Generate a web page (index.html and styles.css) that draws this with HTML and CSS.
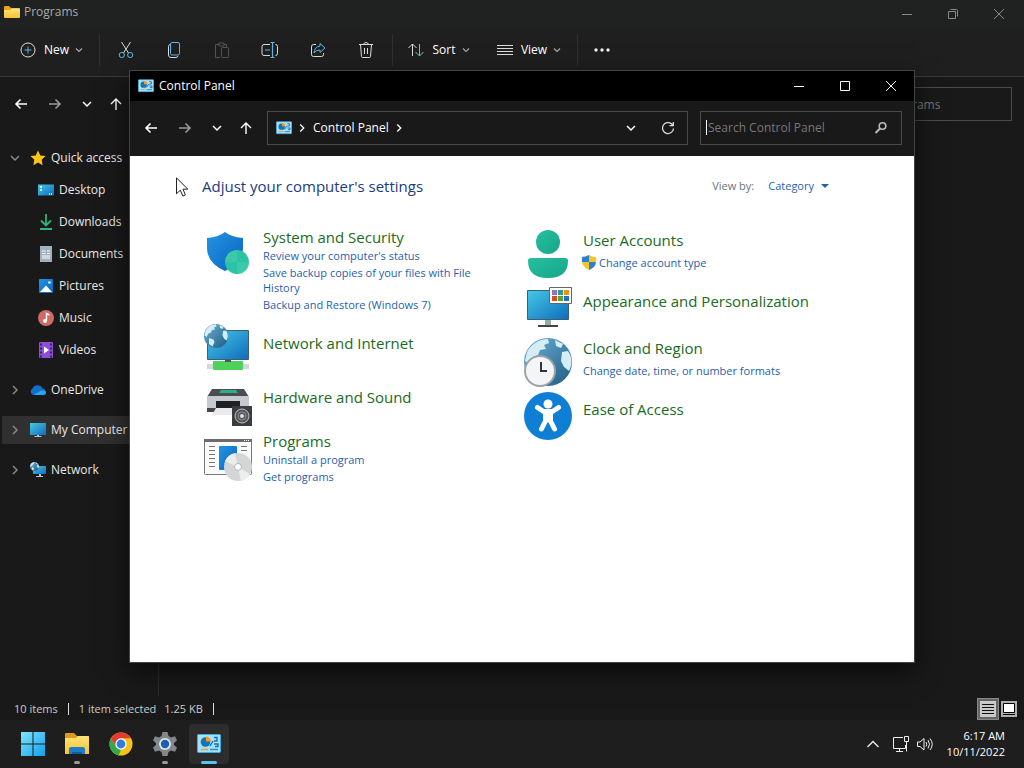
FILE: index.html
```
<!DOCTYPE html>
<html lang="en">
<head>
<meta charset="UTF-8">
<meta name="viewport" content="width=device-width, initial-scale=1.0">
<title>Control Panel</title>
<link rel="stylesheet" href="styles.css">
</head>
<body>

<!-- shared icons -->
<svg class="defs" aria-hidden="true">
  <defs>
    <linearGradient id="g-blue" x1="0" y1="0" x2="1" y2="1"><stop offset="0" stop-color="#2393e2"/><stop offset="1" stop-color="#0a66be"/></linearGradient>
    <linearGradient id="g-screen" x1="0" y1="0" x2="1" y2="1"><stop offset="0" stop-color="#45c8e6"/><stop offset="1" stop-color="#0f6cbd"/></linearGradient>
    <linearGradient id="g-green" x1="0" y1="0" x2="1" y2="1"><stop offset="0" stop-color="#26bfa0"/><stop offset="1" stop-color="#17a588"/></linearGradient>
    <linearGradient id="g-globe" x1="0" y1="0" x2="1" y2="1"><stop offset="0" stop-color="#6fb4d6"/><stop offset="1" stop-color="#1d5a83"/></linearGradient>
    <linearGradient id="g-folder" x1="0" y1="0" x2="0" y2="1"><stop offset="0" stop-color="#ffe27a"/><stop offset="1" stop-color="#f7c331"/></linearGradient>
    <linearGradient id="g-win" x1="0" y1="0" x2="1" y2="1"><stop offset="0" stop-color="#7fe3ff"/><stop offset="1" stop-color="#12a0ec"/></linearGradient>
  </defs>
  <symbol id="i-back" viewBox="0 0 16 16"><path d="M14 8H3M7.500 3.500 3 8l4.500 4.500" fill="none" stroke="currentColor" stroke-width="1.600"/></symbol>
  <symbol id="i-forward" viewBox="0 0 16 16"><path d="M2 8h11M8.500 3.500 13 8l-4.500 4.500" fill="none" stroke="currentColor" stroke-width="1.600"/></symbol>
  <symbol id="i-up" viewBox="0 0 16 16"><path d="M8 14V3M3 8l5-5 5 5" fill="none" stroke="currentColor" stroke-width="1.400"/></symbol>
  <symbol id="i-down" viewBox="0 0 16 16"><path d="m4 6 4 4 4-4" fill="none" stroke="currentColor" stroke-width="1.500"/></symbol>
  <symbol id="i-right" viewBox="0 0 16 16"><path d="m6 4 4 4-4 4" fill="none" stroke="currentColor" stroke-width="1.500"/></symbol>
  <symbol id="i-min" viewBox="0 0 12 12"><path d="M1 6.500h10" stroke="currentColor"/></symbol>
  <symbol id="i-max" viewBox="0 0 12 12"><path d="M1.500 1.500h9v9h-9z" fill="none" stroke="currentColor"/></symbol>
  <symbol id="i-restore" viewBox="0 0 12 12"><path d="M1.500 3.500h7v7h-7zM3.500 1.500h6q1 0 1 1v6" fill="none" stroke="currentColor"/></symbol>
  <symbol id="i-close" viewBox="0 0 12 12"><path d="m1 1 10 10M11 1 1 11" stroke="currentColor"/></symbol>
  <symbol id="i-panel" viewBox="0 0 24 20">
    <rect x=".5" y=".5" width="23" height="18" rx="1" fill="#a5e2fa" stroke="#3aaee0"/>
    <circle cx="8.500" cy="8" r="4.800" fill="#1673b8"/><path d="M9 7.500V2.500a5 5 0 0 1 5 5z" fill="#f39a2b"/>
    <path d="m13 12 3-5M17 3.500h3v3.500h-3M17 10h4v2.500h-3" fill="none" stroke="#1b6fae" stroke-width="1.400"/>
    <path d="M4 15.500h7" stroke="#f39a2b" stroke-width="1.500"/><path d="M13 15.500h8" stroke="#2f8fd0" stroke-width="1.500"/>
  </symbol>
  <symbol id="i-globe" viewBox="0 0 48 48">
    <circle cx="24" cy="24" r="24" fill="url(#g-globe)"/>
    <path d="M3 14C8 5 16 1 24 1l1 4-5 2 2 4-6 1-2 5-5 2-4 7-4-3zM31 2l8 4-2 4-5-2zM38 14l6-1c5 7 4 15 1 20l-5-4-3-6zM10 28l9 3 2 5-4 9-7-5z" fill="#d5edf7"/>
  </symbol>
  <symbol id="i-monitor" viewBox="0 0 16 16"><path d="M0 1h16v12H0z" fill="url(#g-screen)"/><path d="M7 13h2v1H7zM4.500 14h7v1h-7z" fill="#b9c3cb"/></symbol>
  <symbol id="i-folder" viewBox="0 0 16 16"><path d="M0 3q0-1 1-1h4l2 2h8q1 0 1 1v3H0z" fill="#e9a321"/><path d="M0 6h6l2-1.500h7q1 0 1 1V13q0 1-1 1H1q-1 0-1-1z" fill="url(#g-folder)"/></symbol>
</svg>

<div class="desktop">

  <section class="explorer" aria-label="Programs">
    <header class="explorer-title">
      <div class="explorer-name"><svg class="ico"><use href="#i-folder"/></svg><span>Programs</span></div>
      <div class="win-buttons">
        <button aria-label="Minimize"><svg><use href="#i-min"/></svg></button>
        <button aria-label="Restore"><svg><use href="#i-restore"/></svg></button>
        <button aria-label="Close"><svg><use href="#i-close"/></svg></button>
      </div>
    </header>

    <div class="toolbar">
      <button class="tool tool-new">
        <svg class="ico" viewBox="0 0 16 16" fill="none"><circle cx="8" cy="8" r="7" stroke="#ddd"/><path d="M8 4.500v7M4.500 8h7" stroke="#5cb8e6"/></svg>
        <span>New</span><svg class="caret"><use href="#i-down"/></svg>
      </button>
      <span class="rule"></span>
      <div class="tool-icons">
        <button aria-label="Cut"><svg class="ico" viewBox="0 0 16 16" fill="none"><path d="M3.500 0 10.500 11M12.500 0l-7 11" stroke="#ddd"/><circle cx="3.800" cy="13" r="2.600" stroke="#5cb8e6"/><circle cx="12.200" cy="13" r="2.600" stroke="#5cb8e6"/></svg></button>
        <button aria-label="Copy"><svg class="ico" viewBox="0 0 16 16" fill="none"><rect x="4.500" y=".5" width="9" height="12.500" rx="1.500" stroke="#5cb8e6"/><path d="M4 2.500Q2.500 3 2.500 4.500V13q0 2.500 2.500 2.500h5q1.500 0 2-1.500" stroke="#ddd"/></svg></button>
        <button aria-label="Paste" disabled><svg class="ico" viewBox="0 0 16 16" fill="none" stroke="#555"><path d="M5 2.500H1.500v13H6M10 2.500h2.500V5M5 1h5v3H5z"/><rect x="7.500" y="5.500" width="7" height="10" rx="1"/></svg></button>
        <button aria-label="Rename"><svg class="ico ico-wide" viewBox="0 0 18 16" fill="none"><path d="M9 2.500H3Q1 2.500 1 4.500v7q0 2 2 2h6M14.500 2.500q2 0 2 2v7q0 2-2 2" stroke="#ddd"/><path d="M9.500.5h4M11.500.5v15M9.500 15.500h4M4 8h5" stroke="#5cb8e6" stroke-width="1.200"/></svg></button>
        <button aria-label="Share"><svg class="ico" viewBox="0 0 16 16" fill="none"><path d="M6 2.500H3.500q-2 0-2 2v8q0 2 2 2h8q2 0 2-2V11" stroke="#ddd"/><path d="M10 1.500 15 6l-5 4.500V8q-4 0-6 3 .5-6 6-7z" stroke="#5cb8e6"/></svg></button>
        <button aria-label="Delete"><svg class="ico" viewBox="0 0 16 16" fill="none" stroke="#ddd"><path d="M1 2.500h14M5.500 2.500Q6 .5 8 .5t2.500 2M2.500 2.500l1 12q0 1 1 1h7q1 0 1-1l1-12M6.500 6v6M9.500 6v6"/></svg></button>
      </div>
      <span class="rule"></span>
      <button class="tool tool-sort">
        <svg class="ico ico-wide" viewBox="0 0 18 16" fill="none"><path d="M5.500 14V2M1.500 6l4-4 4 4" stroke="#ddd"/><path d="M12.500 2v12M8.500 10l4 4 4-4" stroke="#6cc5d0"/></svg>
        <span>Sort</span><svg class="caret"><use href="#i-down"/></svg>
      </button>
      <button class="tool tool-view">
        <svg class="ico" viewBox="0 0 16 16" stroke="#ddd"><path d="M0 3.500h16M0 6.500h16M0 9.500h16M0 12.500h16"/></svg>
        <span>View</span><svg class="caret"><use href="#i-down"/></svg>
      </button>
      <span class="rule"></span>
      <button class="tool-more" aria-label="See more"><svg class="ico ico-wide" viewBox="0 0 18 16" fill="#eee"><circle cx="3" cy="8" r="1.700"/><circle cx="9" cy="8" r="1.700"/><circle cx="15" cy="8" r="1.700"/></svg></button>
    </div>

    <div class="nav-row">
      <div class="nav-buttons">
        <button aria-label="Back"><svg class="ico"><use href="#i-back"/></svg></button>
        <button aria-label="Forward" class="dim"><svg class="ico"><use href="#i-forward"/></svg></button>
        <button aria-label="Recent locations" class="slim"><svg class="ico"><use href="#i-down"/></svg></button>
        <button aria-label="Up" class="slim"><svg class="ico"><use href="#i-up"/></svg></button>
      </div>
      <div class="address"></div>
      <input class="explorer-search" type="text" placeholder="Search Programs" aria-label="Search Programs">
    </div>

    <div class="explorer-body">
      <nav class="sidebar">
        <ul class="group">
          <li><a class="row" href="#"><svg class="chev"><use href="#i-down"/></svg><svg class="ico" viewBox="0 0 16 16"><path d="m8 .5 2.300 4.900 5.200.7-3.800 3.700.9 5.400L8 12.600l-4.600 2.600.9-5.400L.5 6.100l5.200-.7z" fill="#fcc419"/></svg><span>Quick access</span></a></li>
          <li><a class="row sub" href="#"><svg class="ico" viewBox="0 0 16 16"><path d="M0 2.500h16v11H0z" fill="url(#g-screen)"/><path d="M2 5h2M2 8h2M11 12h1M13 12h1" stroke="#fff" stroke-width="1.500"/></svg><span>Desktop</span></a></li>
          <li><a class="row sub" href="#"><svg class="ico" viewBox="0 0 16 16" fill="none" stroke="#2fb380" stroke-width="1.800"><path d="M8 0v11M3 6.500l5 5 5-5M2 15h12"/></svg><span>Downloads</span></a></li>
          <li><a class="row sub" href="#"><svg class="ico" viewBox="0 0 16 16"><path d="M2 0h12v16H2z" fill="#9fb0bf"/><path d="M4 5h3.500M4 7.500h3.500M9 5h3M9 7.500h3M4 10h8M4 12h8" stroke="#fff"/></svg><span>Documents</span></a></li>
          <li><a class="row sub" href="#"><svg class="ico" viewBox="0 0 16 16"><rect x="1" y="1" width="14" height="14" rx="1" fill="url(#g-blue)"/><path d="m2 14 6-6.500 6 6.500z" fill="#fff"/><circle cx="11.500" cy="4.500" r="1.300" fill="#fff"/></svg><span>Pictures</span></a></li>
          <li><a class="row sub" href="#"><svg class="ico" viewBox="0 0 16 16"><circle cx="8" cy="8" r="8" fill="#cf6a66"/><path d="M8.500 10.500v-7l3 1.500" fill="none" stroke="#fff" stroke-width="1.400"/><circle cx="7" cy="11" r="2" fill="#fff"/></svg><span>Music</span></a></li>
          <li><a class="row sub" href="#"><svg class="ico" viewBox="0 0 16 16"><rect x="1" width="14" height="16" rx="1" fill="#8d4fd6"/><path d="M3 1.500v14M13 1.500v14" stroke="#3b1a73" stroke-width="2" stroke-dasharray="2 2"/><path d="m6 4.500 5 3.500-5 3.500z" fill="#fff"/></svg><span>Videos</span></a></li>
        </ul>
        <ul class="group">
          <li><a class="row" href="#"><svg class="chev"><use href="#i-right"/></svg><svg class="ico" viewBox="0 0 16 16"><path d="M3.500 13A3.500 3.500 0 0 1 2.500 6.500 5.500 5.500 0 0 1 12.500 6.500 3.300 3.300 0 0 1 13 13z" fill="#0f6fc9"/><path d="M3.500 13 11 8.500q5-.5 5 2 0 2.500-3 2.500z" fill="#2ba4ee"/></svg><span>OneDrive</span></a></li>
        </ul>
        <ul class="group">
          <li><a class="row selected" href="#"><svg class="chev"><use href="#i-right"/></svg><svg class="ico"><use href="#i-monitor"/></svg><span>My Computer</span></a></li>
        </ul>
        <ul class="group">
          <li><a class="row" href="#"><svg class="chev"><use href="#i-right"/></svg><svg class="ico" viewBox="0 0 16 16"><path d="M3 4h13v8H3z" fill="url(#g-screen)"/><path d="M9 12h2v2H9zM6 14h7v1H6z" fill="#b9c3cb"/><use href="#i-globe" width="9" height="9"/></svg><span>Network</span></a></li>
        </ul>
      </nav>
      <div class="files"></div>
    </div>

    <footer class="status">
      <span>10 items</span><i></i><span>1 item selected</span><span class="size">1.25 KB</span><i></i>
      <div class="status-views">
        <button class="on" aria-label="Details view"><svg viewBox="0 0 16 16"><path d="M0 0h16v16H0z" fill="#c9c9c9"/><path d="M2 3.500h12M2 6.500h12M2 9.500h12M2 12.500h12" stroke="#111"/></svg></button>
        <button aria-label="Large icons"><svg viewBox="0 0 16 16"><path d="M0 0h16v16H0z" fill="#b0b0b0"/><path d="M2.500 2.500h11v9h-11z" fill="#fff" stroke="#000"/><path d="M2 13.500h12" stroke="#000"/></svg></button>
      </div>
    </footer>
  </section>

  <section class="panel" aria-label="Control Panel">
    <header class="panel-title">
      <svg class="ico"><use href="#i-panel"/></svg><span>Control Panel</span>
      <div class="win-buttons">
        <button aria-label="Minimize"><svg><use href="#i-min"/></svg></button>
        <button aria-label="Maximize"><svg><use href="#i-max"/></svg></button>
        <button aria-label="Close"><svg><use href="#i-close"/></svg></button>
      </div>
    </header>

    <div class="panel-nav">
      <div class="nav-buttons">
        <button aria-label="Back"><svg class="ico"><use href="#i-back"/></svg></button>
        <button aria-label="Forward" class="dim"><svg class="ico"><use href="#i-forward"/></svg></button>
        <button aria-label="Recent locations" class="slim"><svg class="ico"><use href="#i-down"/></svg></button>
        <button aria-label="Up" class="slim"><svg class="ico"><use href="#i-up"/></svg></button>
      </div>
      <div class="address">
        <svg class="ico"><use href="#i-panel"/></svg>
        <svg class="crumb"><use href="#i-right"/></svg>
        <a href="#">Control Panel</a>
        <svg class="crumb"><use href="#i-right"/></svg>
        <button class="history" aria-label="Previous locations"><svg class="ico"><use href="#i-down"/></svg></button>
        <button aria-label="Refresh"><svg class="ico" viewBox="0 0 16 16" fill="none" stroke="#ddd" stroke-width="1.300"><path d="M13.500 8.500a5.500 5.500 0 1 1-2-4.700L13 5.500M13.300 2v3.700H9.500"/></svg></button>
      </div>
      <div class="search">
        <span class="text-caret"></span>
        <input type="text" placeholder="Search Control Panel" aria-label="Search Control Panel">
        <svg class="ico" viewBox="0 0 16 16" fill="none" stroke="#bbb"><circle cx="9.500" cy="6" r="3.300" stroke-width="1.600"/><path d="M7 8.500 2.500 13" stroke-width="2"/></svg>
      </div>
    </div>

    <main class="content">
      <div class="content-head">
        <h1>Adjust your computer's settings</h1>
        <div class="view-by"><span>View by:</span><button>Category<svg viewBox="0 0 8 4"><path d="M0 0h8L4 4z" fill="#1d63a5"/></svg></button></div>
      </div>

      <div class="categories">
        <div class="column">
          <article class="tile tile-list">
            <svg class="tile-icon" viewBox="0 0 48 52"><path d="M21 5q6 5 18 6v10q0 15-18 23Q3 36 3 21V11q12-1 18-6z" fill="url(#g-blue)"/><circle cx="33" cy="35" r="12" fill="#2cc3a4"/><path d="M33 35V23a12 12 0 0 0-12 12zM33 35h12a12 12 0 0 1-12 12z" fill="#4fd3b4" opacity=".4"/></svg>
            <div class="tile-text">
              <h2><a href="#">System and Security</a></h2>
              <ul>
                <li><a href="#">Review your computer's status</a></li>
                <li><a href="#">Save backup copies of your files with File History</a></li>
                <li><a href="#">Backup and Restore (Windows 7)</a></li>
              </ul>
            </div>
          </article>
          <article class="tile tile-bare">
            <svg class="tile-icon" viewBox="0 0 48 52"><path d="M3.500 7.500h41v29h-41z" fill="url(#g-screen)" stroke="#3f5f70"/><path d="M3 41h6v5H3zM39 41h6v5h-6z" fill="#d5d9d5"/><rect x="9" y="38" width="30" height="9" rx="1" fill="#4ed15b"/><path d="M21 37h6v2h-6z" fill="#555"/><use href="#i-globe" y="1" width="24" height="24"/></svg>
            <div class="tile-text"><h2><a href="#">Network and Internet</a></h2></div>
          </article>
          <article class="tile tile-bare">
            <svg class="tile-icon" viewBox="0 0 48 52"><path d="M8 12h32l5 8H3z" fill="#4a4d51"/><path d="M17 13h15l2 3H15z" fill="#2fae8a"/><path d="M3 19h42v13H3z" fill="#c6c9cd"/><path d="M3 31h42v4H3z" fill="#44474b"/><path d="M12 24h24v10H12z" fill="#1e2023"/><path d="M12 31h22l-3 7H8z" fill="#e8eaec"/><path d="M28 29h20v20H28z" fill="#3a3c3f"/><circle cx="38" cy="39" r="7" fill="#55585c" stroke="#c0c0c0"/><circle cx="38" cy="39" r="4" fill="none" stroke="#888"/><circle cx="38" cy="39" r="2" fill="#ddd"/></svg>
            <div class="tile-text"><h2><a href="#">Hardware and Sound</a></h2></div>
          </article>
          <article class="tile tile-list">
            <svg class="tile-icon" viewBox="0 0 48 52"><rect x=".5" y="8.500" width="47" height="35" rx="1" fill="#fafafa" stroke="#777"/><path d="M0 8h48v3H0z" fill="#6c6c6c"/><path d="M40 9.500h1m1 0h1m1 0h1" stroke="#fff"/><path d="M5 15.500h6M5 19.500h6M5 23.500h6M5 27.500h6M5 31.500h6M5 35.500h6M37 15.500h6M37 19.500h6" stroke="#777"/><rect x="15" y="15" width="18" height="24" rx="1" fill="url(#g-blue)"/><circle cx="34" cy="36" r="14" fill="#d3d5d6"/><path d="m34 36-13-6a14 14 0 0 1 10-8zM34 36l12 7a14 14 0 0 1-9 7z" fill="#eceeee"/><circle cx="34" cy="36" r="3.500" fill="#fff" stroke="#b5b5b5"/></svg>
            <div class="tile-text">
              <h2><a href="#">Programs</a></h2>
              <ul>
                <li><a href="#">Uninstall a program</a></li>
                <li><a href="#">Get programs</a></li>
              </ul>
            </div>
          </article>
        </div>

        <div class="column">
          <article class="tile tile-one">
            <svg class="tile-icon" viewBox="0 0 48 52"><circle cx="24" cy="15" r="12" fill="url(#g-green)"/><path d="M7 31h34q3 0 3 3 0 17-20 17T4 34q0-3 3-3z" fill="url(#g-green)"/></svg>
            <div class="tile-text">
              <h2><a href="#">User Accounts</a></h2>
              <ul>
                <li class="uac"><svg viewBox="0 0 14 15"><path d="M7 0q3 2 7 2v4Q14 12 7 15 0 12 0 6V2q4 0 7-2z" fill="#f6c52e"/><path d="M7 0v7H0V2q4 0 7-2zM7 7h6.900Q13.500 12.500 7 15z" fill="#2a7fd0"/></svg><a href="#">Change account type</a></li>
              </ul>
            </div>
          </article>
          <article class="tile tile-bare">
            <svg class="tile-icon" viewBox="0 0 48 52"><path d="M3.500 9.500h41v29h-41z" fill="url(#g-screen)" stroke="#3f5f70"/><path d="M21 39h6v5h-6z" fill="#9aa"/><path d="M14 44h20v2H14z" fill="#444"/><path d="M25.500 6.500h22v16h-22z" fill="#fff" stroke="#666"/><path d="M28 9h5v5h-5z" fill="#9a6fc0"/><path d="M34 9h5v5h-5z" fill="#2a9d8f"/><path d="M40 9h5v5h-5z" fill="#ee8f1c"/><path d="M28 15h5v5h-5z" fill="#d94a2b"/><path d="M34 15h5v5h-5z" fill="#55a630"/><path d="M40 15h5v5h-5z" fill="#1f6fc4"/></svg>
            <div class="tile-text"><h2><a href="#">Appearance and Personalization</a></h2></div>
          </article>
          <article class="tile tile-one">
            <svg class="tile-icon" viewBox="0 0 48 52"><use href="#i-globe" y="3" width="48" height="48"/><circle cx="16" cy="36" r="15" fill="#f4f5f6" stroke="#9da2a6" stroke-width="2"/><path d="M17 27v9h6" fill="none" stroke="#333" stroke-width="2"/></svg>
            <div class="tile-text">
              <h2><a href="#">Clock and Region</a></h2>
              <ul><li><a href="#">Change date, time, or number formats</a></li></ul>
            </div>
          </article>
          <article class="tile tile-bare">
            <svg class="tile-icon" viewBox="0 0 48 52"><circle cx="24" cy="27" r="24" fill="#0f7fd6"/><circle cx="24" cy="15" r="4.500" fill="#fff"/><path d="m13.500 18.500 6 4h9l6-4M24 23v8M21.500 25v7l-4 8M26.500 25v7l4 8" fill="none" stroke="#fff" stroke-width="5" stroke-linecap="round" stroke-linejoin="round"/></svg>
            <div class="tile-text"><h2><a href="#">Ease of Access</a></h2></div>
          </article>
        </div>
      </div>
    </main>
  </section>

  <footer class="taskbar">
    <div class="apps">
      <button aria-label="Start"><svg viewBox="0 0 24 24"><path d="M0 0h11.500v11.500H0zM12.500 0H24v11.500H12.500zM0 12.500h11.500V24H0zM12.500 12.500H24V24H12.500z" fill="url(#g-win)"/></svg></button>
      <button class="open" aria-label="File Explorer"><svg viewBox="0 0 24 24"><path d="M0 2q0-1 1-1h8l3 3h11q1 0 1 1v6H0z" fill="#dd9a1c"/><path d="M0 6h11l2-2h10q1 0 1 1v17H0z" fill="url(#g-folder)"/><path d="M4 22v-5q0-2 2-2h12q2 0 2 2v5z" fill="#1f7cc8"/><path d="M7 20h10v2H7z" fill="#125b9c"/></svg></button>
      <button aria-label="Chrome"><svg viewBox="0 0 24 24"><circle cx="12" cy="12" r="11.500" fill="#fbc116"/><path d="M2 6.250 7 15l5 2.700-2.300 5.600A11.500 11.500 0 0 1 2 6.250z" fill="#2da94f"/><path d="M2 6.250A11.500 11.500 0 0 1 22 6.250H12L7 15z" fill="#e33b2e"/><circle cx="12" cy="12" r="5.700" fill="#fff"/><circle cx="12" cy="12" r="4.400" fill="#2f7de1"/></svg></button>
      <button class="open" aria-label="Settings"><svg viewBox="0 0 24 24"><path d="M9.500 0h5l1 4 2.500 1.500 4-1.200 2 4.200-3 2.500v2l3 2.500-2 4.200-4-1.200-2.500 1.500-1 4h-5l-1-4L6 18.500l-4 1.200-2-4.200L3 13v-2L0 8.500l2-4.200 4 1.200L8.500 4z" fill="#848789"/><circle cx="12" cy="12" r="6" fill="#dfe5ea"/><circle cx="12" cy="12" r="4.200" fill="#1a5fae"/></svg></button>
      <button class="open active" aria-label="Control Panel"><svg viewBox="0 0 24 24"><use href="#i-panel" y="2" width="24" height="20"/></svg></button>
    </div>
    <div class="tray">
      <button aria-label="Show hidden icons"><svg viewBox="0 0 16 16" fill="none" stroke="#eee" stroke-width="1.300"><path d="m2.500 11 5.500-5.500 5.500 5.500"/></svg></button>
      <button aria-label="Network"><svg viewBox="0 0 16 16" fill="none" stroke="#eee"><path d="M10 1.500H.5v11h12V9M6.500 13v2.500M3 15.500h7M11.500.5h4v5h-4zM13.500 5.500v10"/></svg></button>
      <button aria-label="Volume"><svg viewBox="0 0 16 16" fill="none" stroke="#eee"><path d="M.5 6v4.500H3l4 3.500V2.500L3 6zM9 6q1.500 2.200 0 4.500M11 4q3 4.200 0 8.500M13 2.500q4.500 5.700 0 11.500"/></svg></button>
      <div class="clock"><time>6:17 AM</time><time>10/11/2022</time></div>
    </div>
  </footer>

  <svg class="cursor" viewBox="0 0 12 20"><path d="M.5.8v16l3.800-3.600 2.500 5.800 2.600-1.100L7 12.200h4.800z" fill="#fff" stroke="#222"/></svg>
</div>

</body>
</html>
```
FILE: styles.css
```
* {
  box-sizing: border-box;
  margin: 0;
  padding: 0;
}
body {
  font-family: "Open Sans", "Noto Sans", sans-serif;
  font-size: 12px;
  line-height: 16px;
  color: #e8e8e8;
  background: #191919;
}
button, input {
  font: inherit;
  color: inherit;
  background: none;
  border: 0;
  outline: 0;
}
button {
  display: flex;
  align-items: center;
  justify-content: center;
}
a {
  color: inherit;
  text-decoration: none;
}
ul {
  list-style: none;
}
svg {
  display: block;
  flex: none;
}
.defs {
  position: absolute;
  width: 0;
  height: 0;
}
.ico {
  width: 16px;
  height: 16px;
}
.ico-wide {
  width: 18px;
}
.desktop {
  position: relative;
  display: flex;
  flex-direction: column;
  height: 100vh;
  overflow: hidden;
}

/* explorer window */
.explorer {
  flex: 1;
  display: flex;
  flex-direction: column;
  min-height: 0;
}
.explorer-title {
  display: flex;
  justify-content: space-between;
  height: 28px;
  background: #202121;
  color: #aaa;
}
.explorer-name {
  display: flex;
  align-items: center;
  gap: 4px;
  height: 24px;
  padding-left: 4px;
}
.win-buttons {
  display: flex;
  margin-left: auto;
}
.win-buttons button {
  width: 46px;
}
.win-buttons svg {
  width: 12px;
  height: 12px;
}
.explorer .win-buttons {
  color: #888;
  margin-right: 2px;
}
.toolbar {
  display: flex;
  align-items: center;
  height: 49px;
  padding: 0 0 4px 21px;
  background: #1f1f1f;
  border-bottom: 1px solid #3a3a3a;
  color: #fff;
}
.tool {
  gap: 8px;
}
.caret {
  width: 12px;
  height: 12px;
  margin-left: -4px;
  color: #aaa;
}
.tool-new {
  width: 63px;
}
.rule {
  width: 1px;
  height: 32px;
  margin: 0 15px;
  background: #303030;
}
.tool-icons {
  display: flex;
  margin: 0 -13px;
}
.tool-icons button {
  width: 48px;
}
.tool-sort {
  width: 62px;
}
.tool-view {
  width: 64px;
  margin-left: 28px;
}

.nav-row {
  display: flex;
  align-items: center;
  height: 54px;
  padding-right: 12px;
}
.nav-buttons {
  display: flex;
  padding-left: 4px;
  margin-right: 8px;
  color: #fff;
}
.nav-buttons button {
  width: 34px;
  height: 32px;
}
.nav-buttons .slim {
  width: 29px;
}
.nav-buttons .dim {
  color: #999;
}
.address {
  flex: 1;
  display: flex;
  align-items: center;
  height: 34px;
  border: 1px solid #4a4a4a;
}
.explorer-search {
  width: 172px;
  height: 34px;
  margin-left: 6px;
  padding: 0 4px;
  border: 1px solid #4a4a4a;
}
input::placeholder {
  color: #777;
  opacity: 1;
}

.explorer-body {
  flex: 1;
  display: flex;
  min-height: 0;
}
.sidebar {
  display: flex;
  flex-direction: column;
  gap: 12px;
  width: 159px;
  padding: 13px 0 0 2px;
  border-right: 1px solid #2c2c2c;
}
.group {
  display: flex;
  flex-direction: column;
  gap: 4px;
}
.row {
  display: flex;
  align-items: center;
  gap: 5px;
  height: 28px;
  padding-left: 5px;
}
.row.sub {
  padding-left: 36px;
}
.row.selected {
  background: #303030;
}
.chev {
  width: 16px;
  height: 16px;
  margin-right: 2px;
  color: #888;
}
.files {
  flex: 1;
}

.status {
  display: flex;
  align-items: center;
  height: 24px;
  padding: 2px 7px 0 14px;
  font-size: 11px;
  color: #ccc;
}
.status i {
  width: 1px;
  height: 12px;
  margin: 0 10px;
  background: #ddd;
}
.size {
  margin-left: 8px;
}
.status-views {
  display: flex;
  align-items: center;
  gap: 2px;
  margin-left: auto;
}
.status-views svg {
  width: 16px;
  height: 16px;
}
.status-views .on {
  width: 22px;
  height: 22px;
  background: #666;
  border: 1px solid #888;
}

/* control panel window, floats over the explorer */
.panel {
  position: absolute;
  top: 70px;
  right: 109px;
  bottom: 105px;
  left: 129px;
  display: flex;
  flex-direction: column;
  border: 1px solid #444;
  background: #191919;
  box-shadow: 0 8px 24px rgba(0, 0, 0, .6);
}
.panel-title {
  display: flex;
  align-items: center;
  gap: 5px;
  height: 30px;
  padding-left: 8px;
  background: #000;
  color: #fff;
}
.panel-title .win-buttons {
  align-self: stretch;
}
.panel-nav {
  display: flex;
  align-items: center;
  height: 55px;
  padding: 0 12px 2px 0;
}
.panel-nav .nav-buttons {
  padding-left: 4px;
  margin-right: 7px;
}
.panel-nav .address {
  padding: 0 11px 0 8px;
  color: #fff;
}
.crumb {
  width: 14px;
  height: 14px;
  margin: 0 4px 0 3px;
}
.address .history {
  margin: 0 21px 0 auto;
}
.search {
  display: flex;
  align-items: center;
  width: 202px;
  height: 34px;
  margin-left: 12px;
  padding: 0 12px 0 5px;
  border: 1px solid #4a4a4a;
}
.search input {
  flex: 1;
  min-width: 0;
  padding-left: 1px;
}
.text-caret {
  width: 1px;
  height: 15px;
  background: #fff;
}

.content {
  flex: 1;
  padding: 19px 73px 0 72px;
  background: #fff;
  overflow: hidden;
}
.content-head {
  display: flex;
  justify-content: space-between;
  align-items: center;
  height: 22px;
  padding-right: 12px;
  margin-bottom: 30px;
}
h1 {
  font-size: 15px;
  font-weight: 400;
  color: #1c3a80;
}
.view-by {
  display: flex;
  gap: 14px;
  font-size: 11px;
  color: #6b7280;
}
.view-by button {
  gap: 7px;
  color: #1f5fae;
}
.view-by button svg {
  width: 8px;
  height: 4px;
}
.categories {
  display: grid;
  grid-template-columns: repeat(2, 320px);
  padding-left: 2px;
}
.column {
  display: flex;
  flex-direction: column;
  gap: 2px;
}
.tile {
  display: flex;
  gap: 11px;
}
.tile-icon {
  width: 48px;
  height: 52px;
}
.tile-text {
  max-width: 228px;
}
.tile-list .tile-text {
  padding-bottom: 7px;
}
.tile-bare .tile-text {
  padding-top: 10px;
}
.tile-one .tile-text {
  padding-top: 3px;
}
h2 {
  font-size: 15px;
  line-height: 21px;
  font-weight: 400;
  color: #1a6b24;
  white-space: nowrap;
}
.tile li {
  font-size: 11px;
  line-height: 15px;
  margin-bottom: 2px;
  color: #1f5fae;
}
.tile-one li {
  margin-top: 4px;
}
.uac {
  display: flex;
  align-items: center;
  gap: 3px;
}
.uac svg {
  width: 14px;
  height: 15px;
  margin-left: -1px;
}

.taskbar {
  display: flex;
  justify-content: space-between;
  height: 48px;
  padding: 0 19px 0 11px;
  background: #1e1e1e;
}
.apps {
  display: flex;
  align-items: center;
  gap: 4px;
  padding-left: 2px;
}
.apps button {
  position: relative;
  width: 40px;
  height: 40px;
  border-radius: 4px;
}
.apps svg {
  width: 24px;
  height: 24px;
}
.apps .active {
  background: #2d2d2d;
}
/* running indicator */
.apps .open::after {
  content: "";
  position: absolute;
  bottom: 0;
  width: 6px;
  height: 3px;
  border-radius: 2px;
  background: #999;
}
.apps .active::after {
  width: 16px;
  background: #5cc0ee;
}
.tray {
  display: flex;
  align-items: center;
  gap: 8px;
}
.tray svg {
  width: 16px;
  height: 16px;
}
.tray button:first-child {
  margin-right: 4px;
}
.clock {
  display: flex;
  flex-direction: column;
  min-width: 64px;
  font-size: 11px;
  text-align: right;
  color: #fff;
}
.cursor {
  position: absolute;
  top: 177px;
  left: 176px;
  width: 12px;
  height: 20px;
}
```
